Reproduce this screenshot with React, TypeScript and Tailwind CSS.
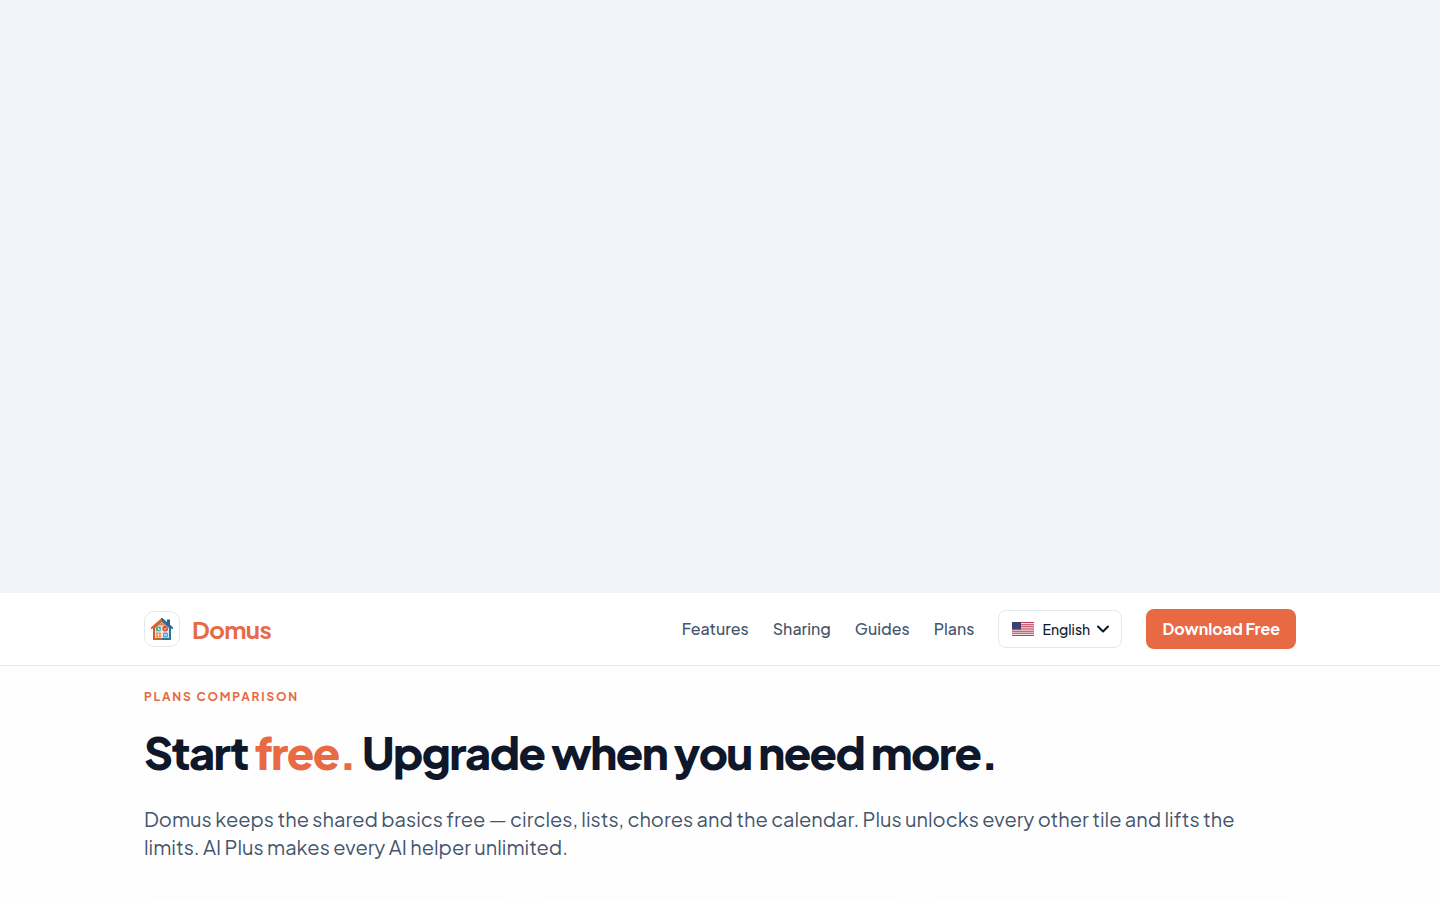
import React from 'react';
import { ChevronDown } from 'lucide-react';

const NAV_LINKS = [
  { label: 'Features', href: '#features' },
  { label: 'Sharing', href: '#sharing' },
  { label: 'Guides', href: '#guides' },
  { label: 'Plans', href: '#plans' },
];

const PLANS = ['free', 'plus', 'ai-plus'];

const HouseLogo: React.FC = () => (
  <svg viewBox="0 0 24 24" className="size-6" aria-hidden="true">
    <path d="M17 2.5h3v6h-3z" fill="#2c6590" />
    <path d="M12 1.5 3 9v14h9z" fill="#cf5f2c" />
    <path d="M12 1.5 21 9v14h-9z" fill="#2874a6" />
    <path d="M12 2 1.8 11" stroke="#d9632c" strokeWidth="2" strokeLinecap="round" />
    <path d="M12 2 22.2 11" stroke="#2f6c96" strokeWidth="2" strokeLinecap="round" />
    <path d="m12 5 7 6v10H5V11z" fill="#efe4dc" />
    <path d="m12 5 4 3.4H8z" fill="#d98a5c" />
    <rect x="6" y="9.5" width="4.8" height="4.8" rx="1" fill="#4aa6a0" />
    <path d="M8.4 10.5v2h1.5" fill="none" stroke="#fff" strokeWidth="0.9" />
    <circle cx="15.2" cy="11.6" r="2.9" fill="#d4503c" />
    <path d="m13.8 11.6 1.1 1.1 2-2.2" fill="none" stroke="#fff" strokeWidth="0.9" />
    <rect x="6" y="15.6" width="5" height="4.8" rx="1" fill="#e58a3c" />
    <path d="M8.5 15.6v4.8M6 18h5" stroke="#f8e6cf" strokeWidth="0.8" />
    <rect x="13" y="15.6" width="5" height="4.8" rx="1" fill="#55a3d8" />
    <path d="M14 18h3" stroke="#e6f3fb" strokeWidth="1.1" />
  </svg>
);

const UsFlag: React.FC = () => (
  <svg viewBox="0 0 22 14" className="h-3.5 w-[22px]" aria-hidden="true">
    <rect width="22" height="14" rx="1" fill="#f4dfe4" />
    <path
      d="M0 .5h22M0 2.7h22M0 4.8h22M0 7h22M0 9.2h22M0 11.3h22M0 13.5h22"
      stroke="#bd3d52"
      strokeWidth="1.1"
    />
    <rect width="9" height="7.5" rx="0.5" fill="#3c3b6e" />
    <path d="M1.2 2h7M1.2 4h7M1.2 6h7" stroke="#7877a0" strokeWidth="0.4" strokeDasharray="0.6 1" />
  </svg>
);

const Header: React.FC = () => (
  <header className="border-b border-[#e9eaee] bg-white">
    <div className="mx-auto flex h-18 max-w-6xl items-center justify-between">
      <a href="#home" className="flex items-center gap-3">
        <span className="flex size-9 items-center justify-center rounded-[10px] border border-slate-200 bg-white">
          <HouseLogo />
        </span>
        <span className="text-2xl font-bold tracking-tight text-[#e76a45]">Domus</span>
      </a>

      <nav className="flex items-center gap-6">
        {NAV_LINKS.map((link) => (
          <a key={link.label} href={link.href} className="text-base font-medium text-slate-600">
            {link.label}
          </a>
        ))}
        <button
          type="button"
          aria-haspopup="listbox"
          className="flex h-[38px] w-31 items-center justify-between rounded-lg border border-slate-200 bg-white pr-2 pl-[13px] text-sm font-medium text-slate-900"
        >
          <span className="flex items-center gap-2">
            <UsFlag />
            English
          </span>
          <ChevronDown size={20} strokeWidth={2.5} />
        </button>
        <button
          type="button"
          className="h-10 rounded-lg bg-[#e76a45] px-4 text-base font-bold whitespace-nowrap text-white"
        >
          Download Free
        </button>
      </nav>
    </div>
  </header>
);

export default function App() {
  return (
    <div className="min-h-screen bg-[#fefefe] font-['Plus_Jakarta_Sans','Figtree','Inter',sans-serif]">
      {/* Hero backdrop */}
      <div className="h-[593px] bg-[#f0f4f9]" />
      <Header />

      <main id="plans" className="mx-auto max-w-6xl">
        <p className="pt-[23px] text-xs leading-4 font-bold tracking-[0.15em] text-[#e76a45] uppercase">
          Plans comparison
        </p>
        <h1 className="mt-5 text-[45px] leading-[54px] font-extrabold tracking-[-0.035em] text-slate-900">
          Start <span className="text-[#e76a45]">free.</span> Upgrade when you need more.
        </h1>
        <p className="mt-[26px] max-w-[1120px] text-xl leading-7 text-slate-600">
          Domus keeps the shared basics free — circles, lists, chores and the calendar. Plus unlocks
          every other tile and lifts the limits. AI Plus makes every AI helper unlimited.
        </p>

        {/* Upper edge of the plan cards */}
        <div className="grid h-9 grid-cols-3 gap-6 overflow-hidden pt-9">
          {PLANS.map((plan) => (
            <div key={plan} className="h-10 rounded-2xl shadow-[0_0_24px_rgb(15_23_42/0.01)]" />
          ))}
        </div>
      </main>
    </div>
  );
}
